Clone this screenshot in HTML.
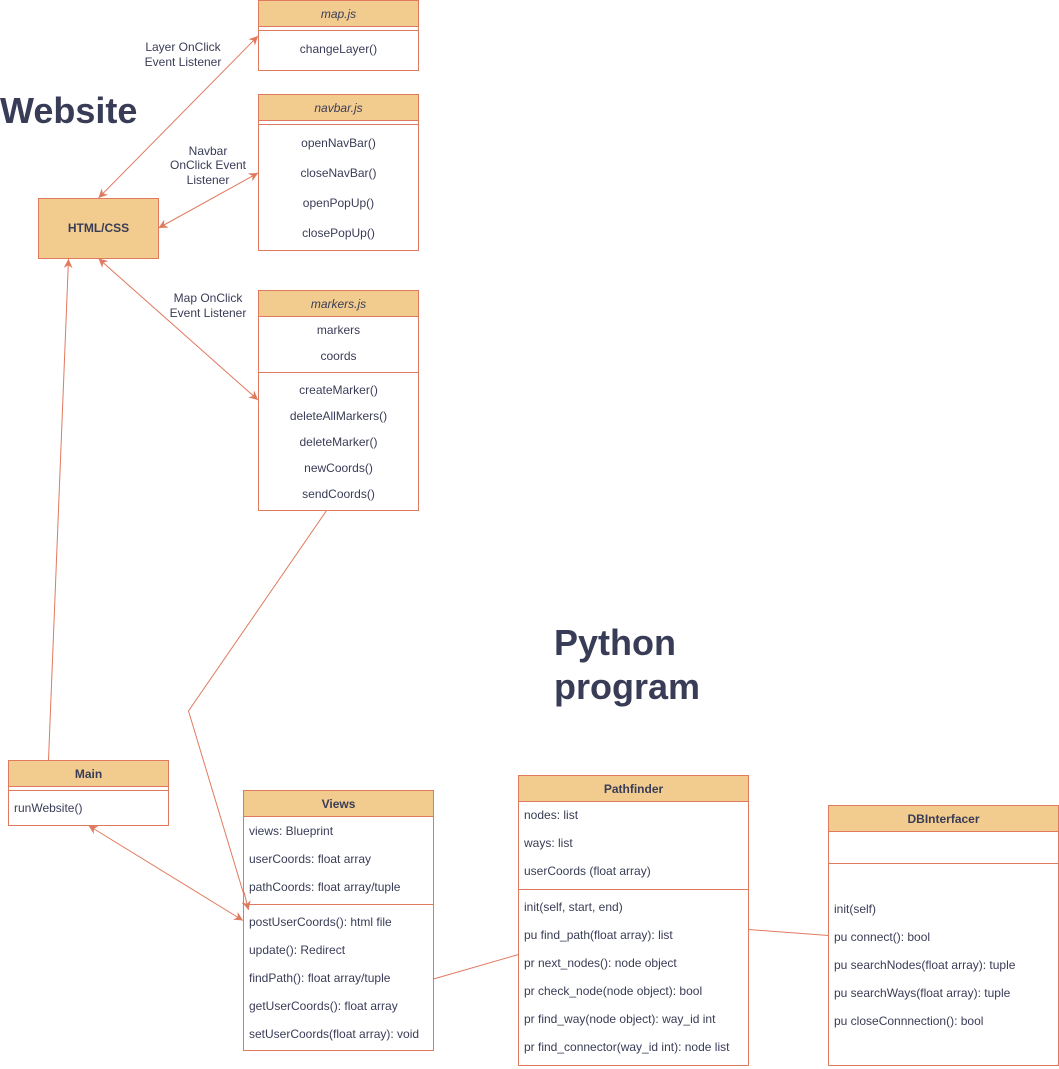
<!DOCTYPE html>
<html><head><meta charset="utf-8"><style>
html,body{margin:0;padding:0;background:#fff;}
svg{display:block;}
text{font-family:"Liberation Sans",Arial,sans-serif;fill:#393C56;font-size:12px;}
.c{text-anchor:middle;}
.b{font-weight:bold;}
.i{font-style:italic;}
.t{font-weight:bold;}
</style></head><body>
<svg width="1059" height="1069" viewBox="0 0 1059 1069" xmlns="http://www.w3.org/2000/svg">
<defs>
<marker id="a" viewBox="0 0 10 10" refX="10" refY="5" markerWidth="9" markerHeight="9" orient="auto-start-reverse" markerUnits="userSpaceOnUse">
<path d="M0,0 L10,5 L0,10 L3,5 Z" fill="#E07A5F"/>
</marker>
</defs>
<g stroke="#E07A5F" stroke-width="1" fill="none">
<line x1="98.5" y1="198" x2="258" y2="36" marker-start="url(#a)" marker-end="url(#a)"/>
<line x1="158.5" y1="228" x2="258" y2="173" marker-start="url(#a)" marker-end="url(#a)"/>
<line x1="98.5" y1="258.5" x2="258" y2="400" marker-start="url(#a)" marker-end="url(#a)"/>
<line x1="48.5" y1="760" x2="68.5" y2="259" marker-end="url(#a)"/>
<line x1="88.5" y1="825.5" x2="243" y2="920.5" marker-start="url(#a)" marker-end="url(#a)"/>
<polyline points="329,507 188.5,711 248.5,910" marker-end="url(#a)"/>
<line x1="433.5" y1="979" x2="518.5" y2="954.5"/>
<line x1="748.5" y1="929.5" x2="828.5" y2="935.5"/>
</g>
<g stroke="#E07A5F" stroke-width="1">
<rect x="258.5" y="0.5" width="160" height="70" fill="#fff"/>
<rect x="258.5" y="0.5" width="160" height="26" fill="#F2CC8F"/>
<line x1="258.5" y1="30.5" x2="418.5" y2="30.5"/>
<rect x="258.5" y="94.5" width="160" height="156" fill="#fff"/>
<rect x="258.5" y="94.5" width="160" height="26" fill="#F2CC8F"/>
<line x1="258.5" y1="124.5" x2="418.5" y2="124.5"/>
<rect x="38.5" y="198.5" width="120" height="60" fill="#F2CC8F"/>
<rect x="258.5" y="290.5" width="160" height="220" fill="#fff"/>
<rect x="258.5" y="290.5" width="160" height="26" fill="#F2CC8F"/>
<line x1="258.5" y1="372.5" x2="418.5" y2="372.5"/>
<rect x="8.5" y="760.5" width="160" height="65" fill="#fff"/>
<rect x="8.5" y="760.5" width="160" height="26" fill="#F2CC8F"/>
<line x1="8.5" y1="790.5" x2="168.5" y2="790.5"/>
<rect x="243.5" y="790.5" width="190" height="260" fill="#fff"/>
<rect x="243.5" y="790.5" width="190" height="26" fill="#F2CC8F"/>
<line x1="243.5" y1="904.5" x2="433.5" y2="904.5"/>
<rect x="518.5" y="775.5" width="230" height="290" fill="#fff"/>
<rect x="518.5" y="775.5" width="230" height="26" fill="#F2CC8F"/>
<line x1="518.5" y1="889.5" x2="748.5" y2="889.5"/>
<rect x="828.5" y="805.5" width="230" height="260" fill="#fff"/>
<rect x="828.5" y="805.5" width="230" height="26" fill="#F2CC8F"/>
<line x1="828.5" y1="863.5" x2="1058.5" y2="863.5"/>
</g>
<line x1="244" y1="892" x2="248.5" y2="910" stroke="#E07A5F" marker-end="url(#a)"/>

<text x="0" y="123" style="font-size:36px" class="t">Website</text>
<text x="554" y="655" style="font-size:36px" class="t">Python</text>
<text x="554" y="699" style="font-size:36px" class="t">program</text>

<text class="c" x="183" y="51">Layer OnClick</text>
<text class="c" x="183" y="66">Event Listener</text>
<text class="c" x="208" y="155">Navbar</text>
<text class="c" x="208" y="169">OnClick Event</text>
<text class="c" x="208" y="184">Listener</text>
<text class="c" x="208" y="302">Map OnClick</text>
<text class="c" x="208" y="317">Event Listener</text>

<text class="c i" x="338.5" y="18">map.js</text>
<text class="c" x="338.5" y="53">changeLayer()</text>

<text class="c i" x="338.5" y="112">navbar.js</text>
<text class="c" x="338.5" y="147">openNavBar()</text>
<text class="c" x="338.5" y="177">closeNavBar()</text>
<text class="c" x="338.5" y="207">openPopUp()</text>
<text class="c" x="338.5" y="237">closePopUp()</text>

<text class="c b" x="98.5" y="232">HTML/CSS</text>

<text class="c i" x="338.5" y="308">markers.js</text>
<text class="c" x="338.5" y="334">markers</text>
<text class="c" x="338.5" y="360">coords</text>
<text class="c" x="338.5" y="394">createMarker()</text>
<text class="c" x="338.5" y="420">deleteAllMarkers()</text>
<text class="c" x="338.5" y="446">deleteMarker()</text>
<text class="c" x="338.5" y="472">newCoords()</text>
<text class="c" x="338.5" y="498">sendCoords()</text>

<text class="c b" x="88.5" y="778">Main</text>
<text x="14" y="812">runWebsite()</text>

<text class="c b" x="338.5" y="808">Views</text>
<text x="249" y="835">views: Blueprint</text>
<text x="249" y="863">userCoords: float array</text>
<text x="249" y="891">pathCoords: float array/tuple</text>
<text x="249" y="926">postUserCoords(): html file</text>
<text x="249" y="954">update(): Redirect</text>
<text x="249" y="982">findPath(): float array/tuple</text>
<text x="249" y="1010">getUserCoords(): float array</text>
<text x="249" y="1038">setUserCoords(float array): void</text>

<text class="c b" x="633.5" y="793">Pathfinder</text>
<text x="524" y="819">nodes: list</text>
<text x="524" y="847">ways: list</text>
<text x="524" y="875">userCoords (float array)</text>
<text x="524" y="911">init(self, start, end)</text>
<text x="524" y="939">pu find_path(float array): list</text>
<text x="524" y="967">pr next_nodes(): node object</text>
<text x="524" y="995">pr check_node(node object): bool</text>
<text x="524" y="1023">pr find_way(node object): way_id int</text>
<text x="524" y="1051">pr find_connector(way_id int): node list</text>

<text class="c b" x="943.5" y="823">DBInterfacer</text>
<text x="834" y="913">init(self)</text>
<text x="834" y="941">pu connect(): bool</text>
<text x="834" y="969">pu searchNodes(float array): tuple</text>
<text x="834" y="997">pu searchWays(float array): tuple</text>
<text x="834" y="1025">pu closeConnnection(): bool</text>
</svg>
</body></html>
